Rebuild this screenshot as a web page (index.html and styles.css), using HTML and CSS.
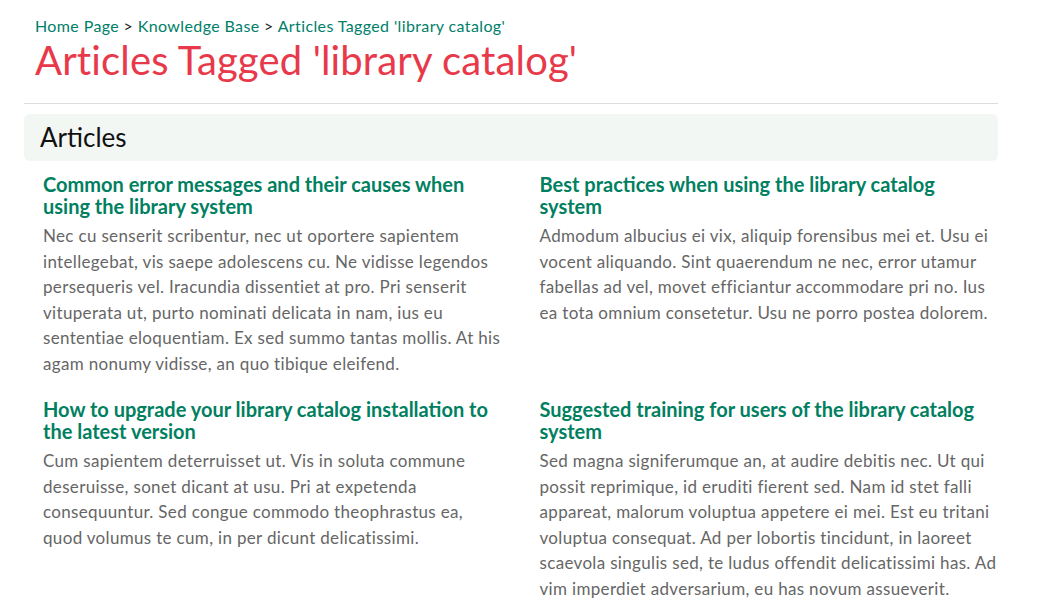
FILE: index.html
```html
<!DOCTYPE html>
<html lang="en">
<head>
<meta charset="utf-8">
<title>Articles Tagged 'library catalog'</title>
<link rel="stylesheet" href="styles.css">
</head>
<body>
<div class="page">
  <header class="page-header">
    <nav class="breadcrumb"><a href="#">Home Page</a> &gt; <a href="#">Knowledge Base</a> &gt; <a href="#">Articles Tagged 'library catalog'</a></nav>
    <h1 class="page-title">Articles Tagged 'library catalog'</h1>
  </header>
  <hr class="divider">
  <section class="articles">
    <h2 class="section-title">Articles</h2>
    <div class="article-grid">
      <article class="article">
        <h3 class="article-title"><a href="#">Common error messages and their causes when using the library system</a></h3>
        <p class="article-text">Nec cu senserit scribentur, nec ut oportere sapientem intellegebat, vis saepe adolescens cu. Ne vidisse legendos persequeris vel. Iracundia dissentiet at pro. Pri senserit vituperata ut, purto nominati delicata in nam, ius eu sententiae eloquentiam. Ex sed summo tantas mollis. At his agam nonumy vidisse, an quo tibique eleifend.</p>
      </article>
      <article class="article">
        <h3 class="article-title"><a href="#">Best practices when using the library catalog system</a></h3>
        <p class="article-text">Admodum albucius ei vix, aliquip forensibus mei et. Usu ei vocent aliquando. Sint quaerendum ne nec, error utamur fabellas ad vel, movet efficiantur accommodare pri no. Ius ea tota omnium consetetur. Usu ne porro postea dolorem.</p>
      </article>
      <article class="article">
        <h3 class="article-title"><a href="#">How to upgrade your library catalog installation to the latest version</a></h3>
        <p class="article-text">Cum sapientem deterruisset ut. Vis in soluta commune deseruisse, sonet dicant at usu. Pri at expetenda consequuntur. Sed congue commodo theophrastus ea, quod volumus te cum, in per dicunt delicatissimi.</p>
      </article>
      <article class="article">
        <h3 class="article-title"><a href="#">Suggested training for users of the library catalog system</a></h3>
        <p class="article-text">Sed magna signiferumque an, at audire debitis nec. Ut qui possit reprimique, id eruditi fierent sed. Nam id stet falli appareat, malorum voluptua appetere ei mei. Est eu tritani voluptua consequat. Ad per lobortis tincidunt, in laoreet scaevola singulis sed, te ludus offendit delicatissimi has. Ad vim imperdiet adversarium, eu has novum assueverit.</p>
      </article>
    </div>
  </section>
</div>
</body>
</html>
```

FILE: styles.css
```css
html, body {
  margin: 0;
  padding: 0;
  background: #ffffff;
}

body {
  font-family: Lato, "Open Sans", "Liberation Sans", sans-serif;
  color: #333333;
}

.page {
  width: 974px;
  padding: 15px 0 0 24px;
}

.page-header {
  padding-left: 11px;
}

.breadcrumb {
  font-size: 16px;
  line-height: 22px;
  letter-spacing: 0.38px;
  color: #222222;
}

.breadcrumb a {
  color: #00806a;
  text-decoration: none;
}

.page-title {
  margin: 0;
  font-size: 40px;
  line-height: 46px;
  font-weight: 400;
  letter-spacing: 0.14px;
  color: #e8394a;
}

.divider {
  margin: 20px 0 0;
  border: 0;
  border-top: 1px solid #dddddd;
  height: 0;
}

.articles {
  margin-top: 10px;
}

.section-title {
  margin: 0;
  padding: 8px 16px;
  background: #f3f7f4;
  border-radius: 6px;
  font-size: 26px;
  line-height: 31px;
  font-weight: 400;
  color: #111111;
}

.article-grid {
  display: grid;
  grid-template-columns: 1fr 1fr;
  column-gap: 38px;
  row-gap: 22px;
  padding: 12px 0 0 19px;
}

.article-title {
  margin: 0 0 6px;
  font-size: 20px;
  line-height: 22px;
  font-weight: 700;
}

.article-title a {
  color: #008060;
  text-decoration: none;
}

.article-text {
  margin: 0;
  font-size: 17px;
  line-height: 1.5;
  letter-spacing: 0.33px;
  color: #666666;
}
```
